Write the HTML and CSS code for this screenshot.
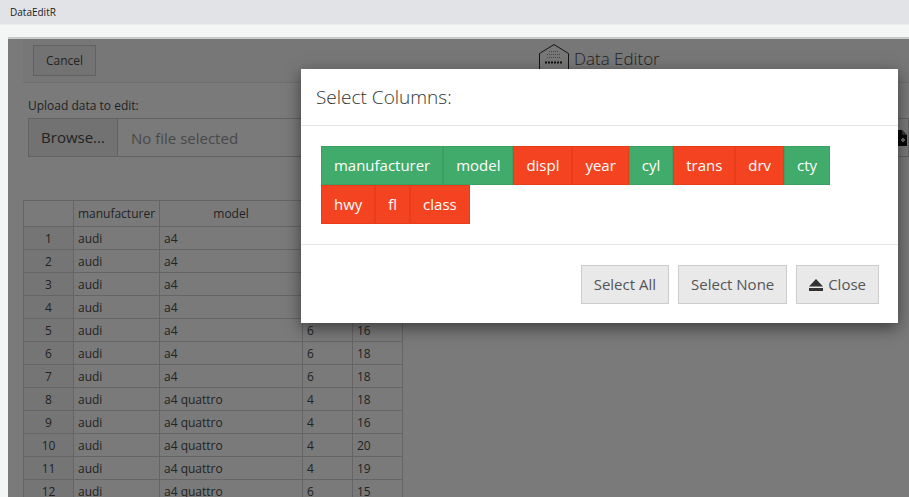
FILE: index.html
```html
<!DOCTYPE html>
<html lang="en">
<head>
  <meta charset="UTF-8" />
  <title>DataEditR</title>
  <link rel="stylesheet" href="styles.css">
</head>
<body>
  <div class="titlebar">DataEditR</div>

  <div class="page">
    <div class="topbar">
      <button class="cancel">Cancel</button>
      <div class="brand">
        <svg class="logo" width="32" height="27" viewBox="0 0 32 27">
          <path d="M1.5 27V9.5L16 .5 30.5 9.5V27" fill="none" stroke="#2a2a2a" stroke-width="1"/>
          <path d="M7 18.5h18" stroke="#222" stroke-width="2" stroke-dasharray="2 1"/>
          <path d="M11 7.5h10M9 10.5h14M9 13.5h14" stroke="#999" stroke-width="1" stroke-dasharray="1 1"/>
        </svg>
        <span class="brand-name">Data Editor</span>
      </div>
    </div>

    <div class="upload">
      <label class="upload-label">Upload data to edit:</label>
      <div class="file-row">
        <span class="browse">Browse...</span>
        <span class="file-name">No file selected</span>
        <svg class="file-icon" width="13" height="16" viewBox="0 0 13 16">
          <path d="M0 0h8l5 5v11H0z" fill="#111"/>
          <path d="M9 0v4h4" fill="none" stroke="#bbb" stroke-width="1"/>
          <path d="M9 8v4M7 10h4" fill="none" stroke="#ddd" stroke-width="2"/>
        </svg>
      </div>
    </div>

    <table class="grid">
      <colgroup>
        <col class="c0"><col class="c1"><col class="c2"><col class="c3"><col class="c4">
      </colgroup>
      <thead>
        <tr><th></th><th>manufacturer</th><th>model</th><th></th><th></th></tr>
      </thead>
      <tbody>
        <tr><td class="idx">1</td><td>audi</td><td>a4</td><td>4</td><td>18</td></tr>
        <tr><td class="idx">2</td><td>audi</td><td>a4</td><td>4</td><td>21</td></tr>
        <tr><td class="idx">3</td><td>audi</td><td>a4</td><td>4</td><td>20</td></tr>
        <tr><td class="idx">4</td><td>audi</td><td>a4</td><td>4</td><td>21</td></tr>
        <tr><td class="idx">5</td><td>audi</td><td>a4</td><td>6</td><td>16</td></tr>
        <tr><td class="idx">6</td><td>audi</td><td>a4</td><td>6</td><td>18</td></tr>
        <tr><td class="idx">7</td><td>audi</td><td>a4</td><td>6</td><td>18</td></tr>
        <tr><td class="idx">8</td><td>audi</td><td>a4 quattro</td><td>4</td><td>18</td></tr>
        <tr><td class="idx">9</td><td>audi</td><td>a4 quattro</td><td>4</td><td>16</td></tr>
        <tr><td class="idx">10</td><td>audi</td><td>a4 quattro</td><td>4</td><td>20</td></tr>
        <tr><td class="idx">11</td><td>audi</td><td>a4 quattro</td><td>4</td><td>19</td></tr>
        <tr><td class="idx">12</td><td>audi</td><td>a4 quattro</td><td>6</td><td>15</td></tr>
      </tbody>
    </table>

    <div class="backdrop"></div>
  </div>

  <div class="modal">
    <div class="modal-header">Select Columns:</div>
    <div class="modal-body">
      <div class="chips">
        <span class="chip on">manufacturer</span><span class="chip on">model</span><span class="chip off">displ</span><span class="chip off">year</span><span class="chip on">cyl</span><span class="chip off">trans</span><span class="chip off">drv</span><span class="chip on">cty</span>
        <span class="chip off">hwy</span><span class="chip off">fl</span><span class="chip off">class</span>
      </div>
    </div>
    <div class="modal-footer">
      <button class="btn">Select All</button>
      <button class="btn">Select None</button>
      <button class="btn">
        <svg class="eject" width="14" height="12" viewBox="0 0 14 12"><path d="M7 0L14 7.5H0zM0 9h14v3H0z" fill="#333"/></svg>
        Close
      </button>
    </div>
  </div>
</body>
</html>
```

FILE: styles.css
```css
html, body {
  height: 100%;
}

body {
  margin: 0;
  font-family: "Open Sans", sans-serif;
  color: #333;
  background: #f4f6f6;
  overflow: hidden;
}

.titlebar {
  height: 24px;
  line-height: 24px;
  padding-left: 10px;
  font-size: 10px;
  color: #222;
  background: #e2e3e6;
  border-bottom: 1px solid #eceded;
}

.page {
  position: absolute;
  top: 38px;
  left: 8px;
  right: 0;
  bottom: 0;
  color: #4a4a4a;
  background: #fff;
  border-top: 1px solid #ccc;
  box-shadow: 0 -1px 0 #c8c8c8;
  box-sizing: border-box;
  overflow: hidden;
}

.backdrop {
  position: absolute;
  inset: -1px 0 0 0;
  background: rgba(0, 0, 0, 0.52);
}

.topbar {
  display: flex;
  align-items: flex-start;
  margin-left: 15px;
  height: 43px;
  background: #f8f8f8;
  border-bottom: 1px solid #e7e7e7;
}

.cancel {
  margin: 6px 0 0 10px;
  width: 63px;
  height: 31px;
  padding: 0;
  font: 12px "Open Sans", sans-serif;
  color: #4a4a4a;
  background: #f0f0f0;
  border: 1px solid #ccc;
}

.brand {
  display: flex;
  align-items: flex-end;
  gap: 4px;
  margin-left: 442px;
  padding-top: 5px;
}

.brand-name {
  font-size: 17px;
  font-weight: 300;
  line-height: 26px;
  margin-bottom: -1px;
}

.upload {
  margin: 15px 0 0 20px;
}

.upload-label {
  display: block;
  font-size: 12px;
  line-height: 15px;
}

.file-row {
  display: flex;
  align-items: center;
  height: 39px;
  margin-top: 5px;
  border: 1px solid #ccc;
  box-sizing: border-box;
  font-size: 15px;
}

.browse {
  width: 89px;
  line-height: 37px;
  text-align: center;
  background: #eee;
  border-right: 1px solid #ccc;
  box-sizing: border-box;
}

.file-name {
  flex: 1;
  padding-left: 13px;
  color: #999;
}

.file-icon {
  margin-right: 1px;
}

.grid {
  margin: 43px 0 0 15px;
  border-collapse: collapse;
  table-layout: fixed;
  width: 379px;
  font-size: 12px;
}

.grid th, .grid td {
  border: 1px solid #d4d4d4;
  height: 22px;
  padding: 0 4px;
  text-align: left;
  font-weight: 400;
  white-space: nowrap;
}

.grid th {
  height: 25px;
  text-align: center;
  padding: 0;
}

.grid .idx {
  text-align: center;
  background: #f5f5f5;
}

.c0 { width: 50px; }
.c1 { width: 86px; }
.c2 { width: 143px; }
.c3 { width: 50px; }
.c4 { width: 50px; }

.modal {
  position: absolute;
  top: 69px;
  left: 301px;
  width: 597px;
  height: 254px;
  background: #fff;
  box-shadow: 0 5px 15px rgba(0, 0, 0, 0.5);
}

.modal-header {
  height: 56px;
  line-height: 56px;
  padding-left: 15px;
  font-size: 19px;
  font-weight: 300;
  border-bottom: 1px solid #e5e5e5;
}

.modal-body {
  padding: 20px;
  height: 78px;
  border-bottom: 1px solid #e5e5e5;
}

.chips {
  display: flex;
  flex-wrap: wrap;
  width: 520px;
}

.chip {
  height: 39px;
  line-height: 37px;
  padding: 0 12px;
  box-sizing: border-box;
  font-size: 14.98px;
  color: #fff;
  border: 1px solid;
}

.chip.on {
  background: #41ab6b;
  border-color: #3c9f63;
}

.chip.off {
  background: #f44321;
  border-color: #e93c1b;
}

.modal-footer {
  display: flex;
  justify-content: flex-end;
  gap: 9px;
  padding: 20px 19px 0 0;
}

.btn {
  height: 39px;
  padding: 0 12px 2px;
  font: 15px "Open Sans", sans-serif;
  color: #555;
  background: #e9e9e9;
  border: 1px solid #ccc;
}

.eject {
  vertical-align: -1px;
  margin-right: 1px;
}
```
